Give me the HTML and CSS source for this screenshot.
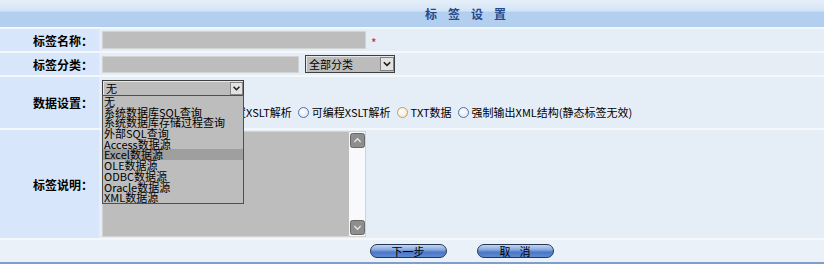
FILE: index.html
```html
<!DOCTYPE html>
<html lang="zh-CN">
<head>
    <meta charset="UTF-8">
    <title>标签设置</title>
    <link rel="stylesheet" href="styles.css">
</head>
<body>
    <div class="panel">
        <div class="panel-head"><span class="panel-title">标签设置</span></div>

        <div class="row row-name">
            <div class="label">标签名称：</div>
            <div class="field">
                <input type="text" class="txt txt-name">
                <span class="req">*</span>
            </div>
        </div>

        <div class="row row-cat">
            <div class="label">标签分类：</div>
            <div class="field">
                <input type="text" class="txt txt-cat">
                <div class="select select-cat">
                    <span class="select-text">全部分类</span>
                    <svg class="select-arrow" width="14" height="14" viewBox="0 0 14 14"><rect x="0.5" y="0.5" width="13" height="13" fill="#e2e2e2" stroke="#808080"/><path d="M3.8 5.2l3.2 3.2 3.2-3.2" fill="none" stroke="#1e1e1e" stroke-width="1.6"/></svg>
                </div>
            </div>
        </div>

        <div class="row row-data">
            <div class="label">数据设置：</div>
            <div class="field field-data">
                <div class="select select-type">
                    <span class="select-text">无</span>
                    <svg class="select-arrow" width="14" height="14" viewBox="0 0 14 14"><rect x="0.5" y="0.5" width="13" height="13" fill="#e2e2e2" stroke="#808080"/><path d="M3.8 5.2l3.2 3.2 3.2-3.2" fill="none" stroke="#1e1e1e" stroke-width="1.6"/></svg>
                    <ul class="select-list">
                        <li>无</li>
                        <li>系统数据库SQL查询</li>
                        <li>系统数据库存储过程查询</li>
                        <li>外部SQL查询</li>
                        <li>Access数据源</li>
                        <li class="is-active">Excel数据源</li>
                        <li>OLE数据源</li>
                        <li>ODBC数据源</li>
                        <li>Oracle数据源</li>
                        <li>XML数据源</li>
                    </ul>
                </div>
                <div class="radios">
                    <label class="radio-item"><span class="radio"></span>静态标签数据</label>
                    <label class="radio-item"><span class="radio"></span>系统内置XSLT解析</label>
                    <label class="radio-item"><span class="radio"></span>可编程XSLT解析</label>
                    <label class="radio-item"><span class="radio radio-hover"></span>TXT数据</label>
                    <label class="radio-item"><span class="radio"></span>强制输出XML结构(静态标签无效)</label>
                </div>
            </div>
        </div>

        <div class="row row-memo">
            <div class="label">标签说明：</div>
            <div class="field">
                <div class="memo">
                    <div class="scroll">
                        <svg width="15" height="15" viewBox="0 0 15 15"><rect x="0.5" y="0.5" width="14" height="14" rx="2" fill="#8e8e8e" stroke="#686868"/><path d="M4.3 9l3.2-3.2 3.2 3.2" fill="none" stroke="#e4e4e4" stroke-width="1.5"/></svg>
                        <svg width="15" height="15" viewBox="0 0 15 15"><rect x="0.5" y="0.5" width="14" height="14" rx="2" fill="#8e8e8e" stroke="#686868"/><path d="M4.3 6l3.2 3.2 3.2-3.2" fill="none" stroke="#e4e4e4" stroke-width="1.5"/></svg>
                    </div>
                </div>
            </div>
        </div>

        <div class="row row-foot">
            <button type="button" class="btn">下一步</button>
            <button type="button" class="btn btn-spaced">取消</button>
        </div>
    </div>
</body>
</html>
```

FILE: styles.css
```css
body {
    margin: 0;
    font-family: "Noto Sans CJK SC", "Liberation Sans", sans-serif;
    font-size: 12px;
    color: #000;
    background-color: #ffffff;
}
.panel {
    width: 824px;
    display: flex;
    flex-direction: column;
    gap: 2px;
    background-color: #f4f8fd;
    border-bottom: 2px solid #7f9fca;
}
.panel-head {
    height: 27px;
    display: flex;
    align-items: center;
    justify-content: center;
    padding-left: 118px;
    background: linear-gradient(#e6eff9, #d4e4f6 11px, #b3cff0 12px, #b3cff0);
}
.panel-title {
    font-weight: bold;
    font-size: 12px;
    letter-spacing: 11px;
    color: #27498a;
}
.row {
    display: flex;
    background-color: #e5edf7;
}
.row-name, .row-cat {
    height: 22px;
}
.row-data {
    height: 51px;
}
.row-memo {
    height: 108px;
}
.label {
    width: 99px;
    flex: none;
    box-sizing: border-box;
    padding-right: 6px;
    display: flex;
    align-items: center;
    justify-content: flex-end;
    background-color: #d7e6fa;
    font-weight: bold;
    font-size: 12px;
}
.field {
    flex: 1;
    display: flex;
    align-items: center;
    padding-left: 3px;
}
.txt {
    box-sizing: border-box;
    height: 18px;
    margin: 0;
    padding: 0;
    border: 1px solid #d3d3d3;
    background-color: #bdbdbd;
}
.txt-name {
    width: 264px;
}
.txt-cat {
    width: 197px;
    height: 17px;
}
.req {
    color: #e01818;
    margin-left: 5px;
    padding-top: 5px;
    font-size: 12px;
}
.select {
    position: relative;
    box-sizing: border-box;
    display: flex;
    align-items: center;
    justify-content: space-between;
    border: 1px solid #3e3e3e;
    box-shadow: inset 1px 1px 0 #e6e6e6;
    background-color: #bcbcbc;
}
.select-cat {
    width: 90px;
    height: 18px;
    margin-left: 6px;
}
.select-type {
    width: 142px;
    height: 16px;
}
.select-text {
    padding-left: 3px;
    font-size: 11px;
    line-height: 14px;
}
.select-arrow {
    flex: none;
}
.select-type .select-arrow {
    width: 13px;
    height: 13px;
}
.select-list {
    position: absolute;
    z-index: 2;
    left: -1px;
    top: 14px;
    width: 142px;
    box-sizing: border-box;
    margin: 0;
    padding: 0;
    list-style: none;
    border: 1px solid #505050;
    background-color: #bdbdbd;
}
.select-list li {
    padding-left: 1px;
    font-size: 11px;
    line-height: 10.7px;
    height: 10.7px;
    white-space: nowrap;
}
.select-list .is-active {
    background-color: #9f9f9f;
}
.field-data {
    flex-direction: column;
    align-items: flex-start;
    justify-content: flex-start;
    padding-top: 3px;
    gap: 10px;
}
.radios {
    display: flex;
    gap: 6px;
    font-size: 11px;
    line-height: 12px;
}
.radio-item {
    display: flex;
    align-items: center;
    gap: 3px;
    white-space: nowrap;
}
.radio {
    width: 9px;
    height: 9px;
    border-radius: 50%;
    border: 1px solid #4f74ad;
    background: radial-gradient(circle at 40% 40%, #ffffff, #d9e1ec);
}
.radio-hover {
    border-color: #d59a45;
    background: radial-gradient(circle at 40% 40%, #ffffff, #f3e2c6);
}
.memo {
    width: 264px;
    height: 106px;
    box-sizing: border-box;
    display: flex;
    justify-content: flex-end;
    border: 1px solid #d3d3d3;
    background-color: #bdbdbd;
}
.scroll {
    width: 16px;
    display: flex;
    flex-direction: column;
    justify-content: space-between;
    align-items: center;
    padding: 1px 0;
    background-color: #f8f9fd;
}
.row-foot {
    height: 22px;
    padding-left: 99px;
    align-items: center;
    justify-content: center;
    gap: 30px;
    background-color: #ebf1f8;
}
.btn {
    width: 77px;
    height: 14px;
    margin: 0;
    padding: 0;
    border: 1px solid #263656;
    border-radius: 7px;
    background: linear-gradient(#c4d6f2, #86a8df 40%, #4a78c6 60%, #5f8ad4);
    font-family: inherit;
    font-size: 11px;
    line-height: 12px;
    color: #000;
    cursor: pointer;
}
.btn-spaced {
    letter-spacing: 9px;
    text-indent: 9px;
}
```
